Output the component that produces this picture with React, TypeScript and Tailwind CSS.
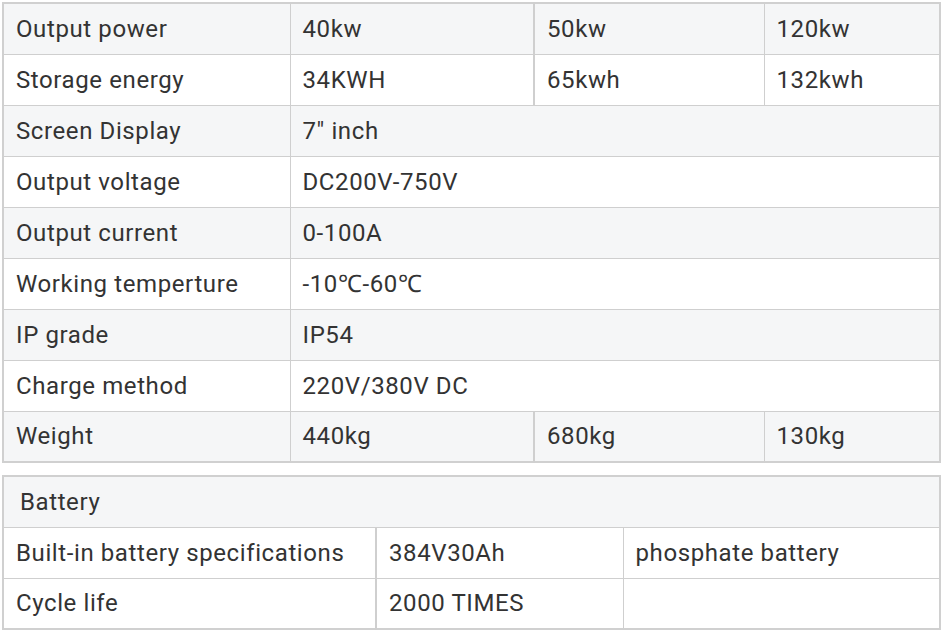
export default function App() {
  const specs: { label: string; values: string[] }[] = [
    { label: "Output power", values: ["40kw", "50kw", "120kw"] },
    { label: "Storage energy", values: ["34KWH", "65kwh", "132kwh"] },
    { label: "Screen Display", values: ["7\u2033 inch"] },
    { label: "Output voltage", values: ["DC200V-750V"] },
    { label: "Output current", values: ["0-100A"] },
    { label: "Working temperture", values: ["-10\u2103-60\u2103"] },
    { label: "IP grade", values: ["IP54"] },
    { label: "Charge method", values: ["220V/380V DC"] },
    { label: "Weight", values: ["440kg", "680kg", "130kg"] },
  ]

  const cell = "border border-[#cfcfcf] px-[12px] h-[51px] align-middle"

  return (
    <main
      className="w-[941px] h-[635px] bg-white text-[#333] text-[24px] tracking-[0.6px] overflow-hidden pt-[2px] pl-[2px]"
      style={{ fontFamily: "Roboto, 'Liberation Sans', sans-serif" }}
    >
      <table className="w-[937px] table-fixed border-collapse border-2 border-[#d0d0d0]">
        <colgroup>
          <col className="w-[287px]" />
          <col className="w-[244px]" />
          <col className="w-[230px]" />
          <col className="w-[176px]" />
        </colgroup>
        <tbody>
          {specs.map((row, i) => (
            <tr key={row.label} className={i % 2 === 0 ? "bg-[#f5f6f7]" : "bg-white"}>
              <td className={cell}>{row.label}</td>
              {row.values.length === 1 ? (
                <td className={cell} colSpan={3}>
                  {row.values[0]}
                </td>
              ) : (
                row.values.map((v, j) => (
                  <td key={v} className={cell + (j === 1 ? " border-l-2" : "")}>
                    {v}
                  </td>
                ))
              )}
            </tr>
          ))}
        </tbody>
      </table>

      <table className="mt-[12px] w-[937px] table-fixed border-collapse border-2 border-[#d0d0d0]">
        <colgroup>
          <col className="w-[373px]" />
          <col className="w-[247px]" />
          <col className="w-[317px]" />
        </colgroup>
        <tbody>
          <tr className="bg-[#f5f6f7]">
            <td className="border border-[#cfcfcf] pl-[16px] h-[51px] align-middle" colSpan={3}>
              Battery
            </td>
          </tr>
          <tr className="bg-white">
            <td className={cell}>Built-in battery specifications</td>
            <td className={cell + " border-l-2"}>384V30Ah</td>
            <td className={cell}>phosphate battery</td>
          </tr>
          <tr className="bg-white">
            <td className={cell}>Cycle life</td>
            <td className={cell + " border-l-2"}>2000 TIMES</td>
            <td className={cell}></td>
          </tr>
        </tbody>
      </table>
    </main>
  )
}
